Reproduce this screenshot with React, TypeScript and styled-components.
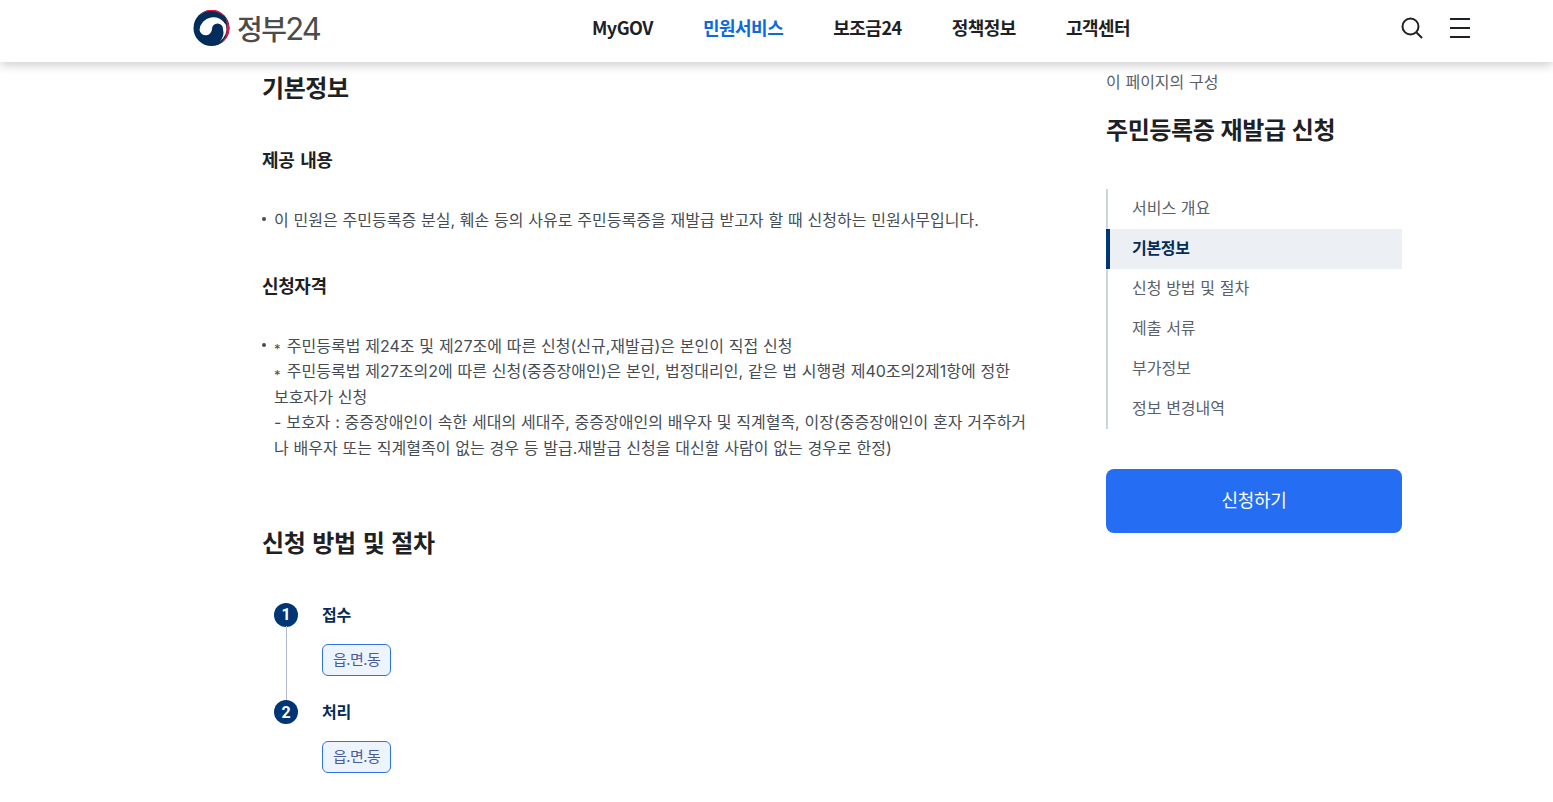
import styled, { createGlobalStyle } from "styled-components";

const GlobalStyle = createGlobalStyle`
  html, body {
    margin: 0;
    padding: 0;
    background: #ffffff;
    overflow: hidden;
    height: 802px;
  }
  body {
    font-family: "Noto Sans CJK KR", "Noto Sans", sans-serif;
    color: #464c53;
    word-spacing: 0.07em;
  }
  * {
    box-sizing: border-box;
  }
`;

const Header = styled.header`
  position: relative;
  z-index: 2;
  height: 62px;
  background: #ffffff;
  box-shadow: 0 3px 10px rgba(0, 0, 0, 0.2);
  display: flex;
  align-items: center;
  padding: 0 83px 0 193px;
`;

const Logo = styled.a`
  display: flex;
  align-items: center;
  gap: 7px;
  width: 399px;
  margin-top: -6px;
`;

const LogoText = styled.span`
  font-size: 28px;
  font-weight: 500;
  letter-spacing: -1.6px;
  line-height: 36px;
  color: #4c4c4c;
`;

const LogoDigits = styled.span`
  font-family: "Inter", sans-serif;
  font-size: 31px;
  font-weight: 400;
  letter-spacing: -2px;
`;

const Nav = styled.nav`
  display: flex;
  gap: 50px;
  margin-top: -8px;
  flex: 1;
`;

const NavItem = styled.a<{ $active?: boolean }>`
  font-size: 18px;
  font-weight: 700;
  letter-spacing: -0.5px;
  color: ${(p) => (p.$active ? "#0b6bdc" : "#1e2124")};
`;

const HeaderTools = styled.div`
  display: flex;
  align-items: center;
  gap: 26px;
  margin-top: -6px;
`;

const Body = styled.div`
  display: flex;
  padding-left: 262px;
`;

const Main = styled.main`
  width: 766px;
`;

const H2 = styled.h2<{ $top?: number }>`
  margin: ${(p) => p.$top ?? 0}px 0 0;
  font-size: 24px;
  font-weight: 700;
  line-height: 36px;
  letter-spacing: -0.4px;
  word-spacing: 0.08em;
  color: #1e2124;
`;

const H3 = styled.h3<{ $top: number }>`
  margin: ${(p) => p.$top}px 0 0;
  font-size: 18px;
  font-weight: 700;
  line-height: 27px;
  letter-spacing: -0.4px;
  word-spacing: 0.12em;
  color: #1e2124;
`;

const BulletText = styled.p<{ $top: number }>`
  position: relative;
  margin: ${(p) => p.$top}px 0 0;
  padding-left: 12px;
  font-family: "Inter", "Noto Sans CJK KR", sans-serif;
  font-size: 16px;
  line-height: 25.6px;
  word-spacing: 0.02em;
  color: #464c53;
  &::before {
    content: "";
    position: absolute;
    left: 0;
    top: 9px;
    width: 4px;
    height: 4px;
    border-radius: 50%;
    background: #464c53;
  }
`;

const Asterisk = styled.span`
  font-size: 13px;
  margin-right: 1.5px;
  vertical-align: -2.5px;
  line-height: 0;
`;

const Steps = styled.ol`
  list-style: none;
  margin: 42px 0 0 12px;
  padding: 0;
`;

const Step = styled.li<{ $last?: boolean }>`
  position: relative;
  display: grid;
  grid-template-columns: 24px 1fr;
  column-gap: 24px;
  height: ${(p) => (p.$last ? "auto" : "97.5px")};
  &::before {
    content: "";
    display: ${(p) => (p.$last ? "none" : "block")};
    position: absolute;
    left: 12px;
    top: 24px;
    bottom: -1px;
    width: 1px;
    background: #b1b8d0;
  }
`;

const StepNumber = styled.span`
  width: 24px;
  height: 24px;
  margin-top: 1px;
  border-radius: 50%;
  background: #003675;
  color: #ffffff;
  display: flex;
  align-items: center;
  justify-content: center;
  font-family: "Roboto", sans-serif;
  font-size: 16px;
  font-weight: 700;
`;

const StepBody = styled.div`
  display: flex;
  flex-direction: column;
  align-items: flex-start;
  gap: 18px;
`;

const StepTitle = styled.strong`
  font-size: 16px;
  font-weight: 700;
  line-height: 24px;
  letter-spacing: -0.3px;
  color: #052b57;
`;

const Tag = styled.span`
  display: block;
  height: 32px;
  padding: 0 10px;
  font-size: 15px;
  line-height: 28px;
  letter-spacing: -0.5px;
  color: #4a5a9c;
  background: #eef4fd;
  border: 1px solid #2f73e0;
  border-radius: 6px;
`;

const Aside = styled.aside`
  width: 296px;
  margin-left: 78px;
  padding-top: 7px;
`;

const PageLabel = styled.div`
  font-size: 16px;
  line-height: 24px;
  color: #58616a;
`;

const AsideTitle = styled.div`
  margin-top: 20px;
  font-size: 24px;
  font-weight: 700;
  line-height: 32px;
  letter-spacing: -0.4px;
  color: #1e2124;
`;

const AsideNav = styled.ul`
  list-style: none;
  margin: 44px 0 0;
  padding: 0;
  border-left: 2px solid #cdd5e0;
`;

const AsideItem = styled.li<{ $active?: boolean }>`
  position: relative;
  height: 40px;
  padding-left: 24px;
  font-size: 16px;
  line-height: 37px;
  font-weight: ${(p) => (p.$active ? 700 : 400)};
  letter-spacing: ${(p) => (p.$active ? "-0.3px" : "0")};
  color: ${(p) => (p.$active ? "#052b57" : "#58616a")};
  background: ${(p) => (p.$active ? "#eceff3" : "transparent")};
  &::before {
    content: "";
    display: ${(p) => (p.$active ? "block" : "none")};
    position: absolute;
    left: -2px;
    top: 0;
    bottom: 0;
    width: 4px;
    background: #003675;
  }
`;

const ApplyButton = styled.button`
  display: block;
  width: 100%;
  height: 64px;
  margin-top: 40px;
  padding: 0 0 5px;
  border: none;
  border-radius: 8px;
  background: #256ef4;
  color: #ffffff;
  font-family: inherit;
  font-size: 18px;
  letter-spacing: -0.3px;
`;

const IconButton = styled.button`
  display: flex;
  padding: 0;
  border: none;
  background: none;
`;

const LogoMark = () => (
  <svg width="37" height="36" viewBox="0 0 37 36">
    <circle cx="18.500" cy="18" r="18" fill="#002d5b" />
    <path
      d="M6.500 20A14 14 0 0 1 33 15A15 15 0 0 1 26.500 31.500A13 13 0 0 0 30 19A5.500 5.500 0 0 0 19 19A6.300 6.300 0 0 1 6.500 20Z"
      fill="#ffffff"
    />
    <path
      d="M7 5.500A18 18 0 0 1 36.500 18A18 18 0 0 1 25.500 34.500A16 16 0 0 0 33.500 18A15 15 0 0 0 7 5.500Z"
      fill="#e2173d"
    />
  </svg>
);

const SearchIcon = () => (
  <svg width="24" height="24" viewBox="0 0 24 24" fill="none" stroke="#1e2124" strokeWidth="2">
    <circle cx="10.500" cy="10.500" r="8" />
    <path d="M16.500 16.500L22 22" />
  </svg>
);

const MenuIcon = () => (
  <svg width="20" height="20" viewBox="0 0 20 20" stroke="#1e2124" strokeWidth="2">
    <path d="M0 1H20M0 10H20M0 19H20" />
  </svg>
);

const navItems = ["MyGOV", "민원서비스", "보조금24", "정책정보", "고객센터"];
const asideItems = ["서비스 개요", "기본정보", "신청 방법 및 절차", "제출 서류", "부가정보", "정보 변경내역"];

export default function App() {
  return (
    <>
      <GlobalStyle />
      <Header>
        <Logo>
          <LogoMark />
          <LogoText>
            정부<LogoDigits>24</LogoDigits>
          </LogoText>
        </Logo>
        <Nav>
          {navItems.map((item) => (
            <NavItem key={item} $active={item === "민원서비스"}>
              {item}
            </NavItem>
          ))}
        </Nav>
        <HeaderTools>
          <IconButton aria-label="검색">
            <SearchIcon />
          </IconButton>
          <IconButton aria-label="메뉴">
            <MenuIcon />
          </IconButton>
        </HeaderTools>
      </Header>
      <Body>
        <Main>
          <H2 $top={7}>기본정보</H2>
          <H3 $top={41}>제공 내용</H3>
          <BulletText $top={35}>
            이 민원은 주민등록증 분실, 훼손 등의 사유로 주민등록증을 재발급 받고자 할 때 신청하는 민원사무입니다.
          </BulletText>
          <H3 $top={38}>신청자격</H3>
          <BulletText $top={35}>
            <Asterisk>*</Asterisk> 주민등록법 제24조 및 제27조에 따른 신청(신규,재발급)은 본인이 직접 신청
            <br />
            <Asterisk>*</Asterisk> 주민등록법 제27조의2에 따른 신청(중증장애인)은 본인, 법정대리인, 같은 법 시행령 제40조의2제1항에 정한 보호자가 신청
            <br />- 보호자 : 중증장애인이 속한 세대의 세대주, 중증장애인의 배우자 및 직계혈족, 이장(중증장애인이 혼자 거주하거나 배우자 또는 직계혈족이 없는 경우 등 발급.재발급 신청을 대신할 사람이 없는 경우로 한정)
          </BulletText>
          <H2 $top={62}>신청 방법 및 절차</H2>
          <Steps>
            <Step>
              <StepNumber>1</StepNumber>
              <StepBody>
                <StepTitle>접수</StepTitle>
                <Tag>읍.면.동</Tag>
              </StepBody>
            </Step>
            <Step $last>
              <StepNumber>2</StepNumber>
              <StepBody>
                <StepTitle>처리</StepTitle>
                <Tag>읍.면.동</Tag>
              </StepBody>
            </Step>
          </Steps>
        </Main>
        <Aside>
          <PageLabel>이 페이지의 구성</PageLabel>
          <AsideTitle>주민등록증 재발급 신청</AsideTitle>
          <AsideNav>
            {asideItems.map((item) => (
              <AsideItem key={item} $active={item === "기본정보"}>
                {item}
              </AsideItem>
            ))}
          </AsideNav>
          <ApplyButton>신청하기</ApplyButton>
        </Aside>
      </Body>
    </>
  );
}
